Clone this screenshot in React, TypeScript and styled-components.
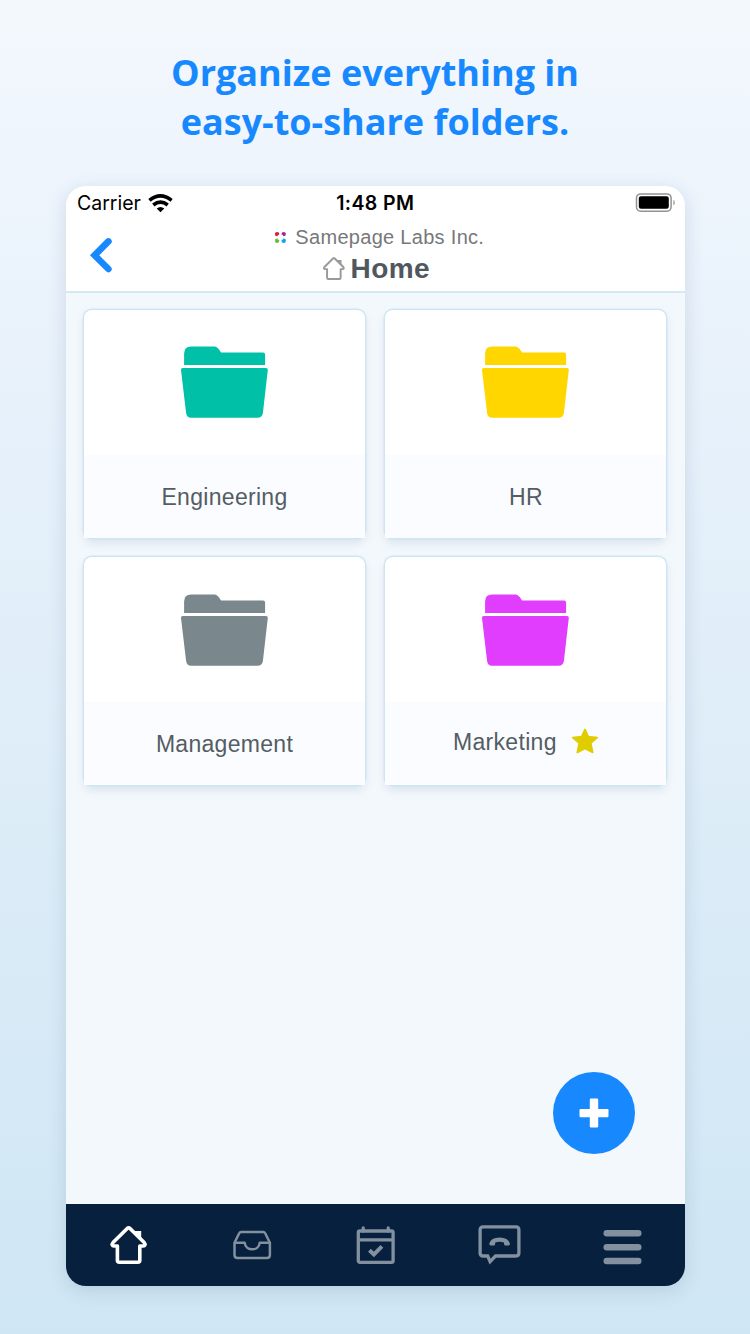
import React from "react";
import styled, { createGlobalStyle } from "styled-components";

const GlobalStyle = createGlobalStyle`
  * { box-sizing: border-box; }
  body { margin: 0; }
  svg { display: block; flex: none; overflow: visible; }
  button { border: 0; padding: 0; background: none; font: inherit; }
`;

const Page = styled.main`
  width: 750px;
  height: 1334px;
  overflow: hidden;
  display: flex;
  flex-direction: column;
  align-items: flex-start;
  background: linear-gradient(180deg, #f3f8fc 0%, #eef5fd 12%, #e9f2fb 25%, #cfe6f4 100%);
`;

const Headline = styled.h1`
  margin: 0;
  width: 750px;
  height: 186px;
  padding-top: 48px;
  font: 700 36px/49px "Open Sans", sans-serif;
  text-align: center;
  color: #1788fe;
`;

const Phone = styled.section`
  width: 618.6px;
  height: 1100px;
  margin-left: 66px;
  border-radius: 20px;
  overflow: hidden;
  display: flex;
  flex-direction: column;
  background: #f3f8fc;
  box-shadow: 0 4px 18px rgba(60, 90, 130, 0.17);
  font-family: "Liberation Sans", Arial, sans-serif;
`;

const StatusBar = styled.div`
  height: 34px;
  display: grid;
  grid-template-columns: 1fr auto 1fr;
  align-items: center;
  padding: 0 9px 0 11px;
  font-family: Inter, sans-serif;
  font-size: 19.5px;
  color: #000;
`;

const Carrier = styled.div`
  display: flex;
  align-items: center;
  gap: 7px;
`;

const Time = styled.div`
  padding-right: 2px;
  font-weight: 600;
  letter-spacing: 0.4px;
`;

const BatterySlot = styled.div`
  display: flex;
  justify-content: flex-end;
  padding-bottom: 1px;
`;

const Header = styled.header`
  height: 73px;
  display: grid;
  grid-template-columns: 60px 1fr 60px;
  background: #fff;
  border-bottom: 2px solid #d3e9f5;
`;

const TopArea = styled.div`
  background: #fff;
`;

const BackButton = styled.button`
  display: flex;
  padding: 17px 0 0 23px;
`;

const Titles = styled.div`
  display: flex;
  flex-direction: column;
  align-items: center;
`;

const Workspace = styled.div`
  height: 33px;
  display: flex;
  align-items: center;
  gap: 8px;
  padding: 2px 0 0 8px;
  font-size: 20px;
  letter-spacing: 0.3px;
  color: #77787a;
`;

const PageTitle = styled.div`
  height: 32px;
  display: flex;
  align-items: center;
  gap: 6px;
  padding-left: 1px;
  font-size: 28px;
  font-weight: 700;
  letter-spacing: 0.4px;
  color: #50585f;
`;

const TitleIcon = styled.span`
  padding-bottom: 1px;
  color: #999;
`;

const Content = styled.div`
  flex: 1;
  display: flex;
  flex-direction: column;
  justify-content: space-between;
  padding: 16.5px 17px 50px 18px;
`;

const Grid = styled.div`
  display: grid;
  grid-template-columns: 281px 281px;
  gap: 19.5px 20.4px;
`;

const Card = styled.article`
  height: 228px;
  display: flex;
  flex-direction: column;
  border-radius: 8px;
  background: #fff;
  box-shadow: 0 0 0 1.5px #cde6f4, 0 5px 10px rgba(70, 100, 140, 0.15);
`;

const CardArt = styled.div`
  height: 145px;
  display: flex;
  justify-content: center;
  padding-top: 36.5px;
`;

const CardLabel = styled.div<{ $starred?: boolean }>`
  flex: 1;
  display: flex;
  align-items: center;
  justify-content: center;
  gap: 14px;
  padding-top: ${({ $starred }) => ($starred ? 0 : 2)}px;
  padding-bottom: ${({ $starred }) => ($starred ? 2 : 0)}px;
  background: #fafcff;
  font-size: 23px;
  letter-spacing: 0.3px;
  color: #545d63;
`;

const AddButton = styled.button`
  align-self: flex-end;
  width: 82px;
  height: 82px;
  margin-right: 32.5px;
  border-radius: 50%;
  background: #1788fe;
  display: flex;
  align-items: center;
  justify-content: center;
`;

const TabBar = styled.nav`
  height: 82.5px;
  display: grid;
  grid-template-columns: repeat(5, 1fr);
  align-items: center;
  background: #06203d;
`;

const Tab = styled.button<{ $active?: boolean }>`
  display: flex;
  justify-content: center;
  color: ${({ $active }) => ($active ? "#fff" : "#82909f")};
`;

const House = ({ size, stroke }: { size: number; stroke: number }) => (
  <svg width={size} height={size} viewBox="-0.6 0 38 38" fill="none" stroke="currentColor" strokeWidth={stroke} strokeLinejoin="round">
    <path d="M17.6 2.4 Q19 1.2 20.4 2.4 L34.6 16.6 C36.2 18.4 35.4 20 33.6 20 H30.2 V34.2 Q30.2 36.2 28.2 36.2 H9.8 Q7.8 36.2 7.8 34.2 V20 H4.4 C2.6 20 1.8 18.4 3.4 16.6 Z" />
    <path d="M25 5 H31.6 V14 L25 7.4 Z" fill="currentColor" stroke="none" />
  </svg>
);

const Folder = ({ color }: { color: string }) => (
  <svg width="88" height="72" viewBox="0.4 0 88 72" fill={color}>
    <path d="M3.5 19 V7.5 Q3.5 0.5 10.5 0.5 H33 C37 0.5 38 3 40.5 6.5 H82.5 Q84.5 6.5 84.5 8.5 V19 Z" />
    <path d="M2 22 H85.5 Q87.3 22 87.2 24 L82.3 67 Q81.6 71.7 77 71.7 H10.5 Q6 71.7 5.5 67 L0.4 24 Q0.3 22 2 22 Z" />
  </svg>
);

const Star = () => (
  <svg width="28" height="28" viewBox="0 2 28 28">
    <path
      d="M14 2.4 L17.3 9.6 L26.2 10.5 L19.8 16.2 L21.7 25.4 L14 21.6 L6.3 25.4 L8.2 16.2 L1.8 10.5 L10.7 9.6 Z"
      fill="#e0cd00"
      stroke="#e0cd00"
      strokeWidth="1.7"
      strokeLinejoin="round"
    />
  </svg>
);

const Wifi = () => (
  <svg width="26" height="19" viewBox="0.5 0 26 19" fill="none" stroke="#000" strokeWidth="3.6">
    <path d="M1.9 6.3 Q13 -2.5 24.1 6.3" />
    <path d="M5.8 11 Q13 5.2 20.2 11" />
    <path d="M9.2 14.4 Q13 11.4 16.8 14.4 L13 18.3 Z" fill="#000" stroke="none" />
  </svg>
);

const Battery = () => (
  <svg width="40" height="20" viewBox="0.4 0 40 20">
    <rect x="0.9" y="0.9" width="34.6" height="17.4" rx="4.2" fill="none" stroke="#929292" strokeWidth="1.5" />
    <rect x="3.2" y="3.3" width="30" height="12.5" rx="2.2" fill="#000" />
    <path d="M38.2 7.4 Q39.4 9.6 38.2 11.8 Z" fill="#929292" stroke="#929292" strokeWidth="0.6" />
  </svg>
);

const Logo = () => (
  <svg width="13" height="13" viewBox="0 0 13 13">
    <circle cx="3.1" cy="3.1" r="2.2" fill="#e8173f" />
    <circle cx="9.7" cy="3.1" r="2.2" fill="#a62793" />
    <circle cx="3.1" cy="9.7" r="2.2" fill="#65bd45" />
    <circle cx="9.7" cy="9.7" r="2.2" fill="#13a5e5" />
    <g fill="#fff">
      <circle cx="4.6" cy="4.7" r="1" />
      <circle cx="8.2" cy="4.7" r="1" />
      <circle cx="4.5" cy="8" r="0.8" />
      <circle cx="8.3" cy="8" r="0.8" />
    </g>
  </svg>
);

const folders = [
  { name: "Engineering", color: "#00c1a7" },
  { name: "HR", color: "#ffd600" },
  { name: "Management", color: "#7a888e" },
  { name: "Marketing", color: "#e03dff", starred: true },
];

export default function App() {
  return (
    <>
      <GlobalStyle />
      <Page>
        <Headline>
          Organize everything in
          <br />
          easy-to-share folders.
        </Headline>
        <Phone>
          <TopArea>
            <StatusBar>
              <Carrier>
                Carrier
                <Wifi />
              </Carrier>
              <Time>1:48 PM</Time>
              <BatterySlot>
                <Battery />
              </BatterySlot>
            </StatusBar>
            <Header>
              <BackButton aria-label="Back">
                <svg width="24" height="36" viewBox="0 0 24 36">
                  <path d="M19.4 4.4 L5.6 18.3 L19.4 32" fill="none" stroke="#1788fe" strokeWidth="6.6" strokeLinecap="round" strokeLinejoin="miter" />
                </svg>
              </BackButton>
              <Titles>
                <Workspace>
                  <Logo />
                  Samepage Labs Inc.
                </Workspace>
                <PageTitle>
                  <TitleIcon>
                    <House size={23} stroke={3.2} />
                  </TitleIcon>
                  Home
                </PageTitle>
              </Titles>
            </Header>
          </TopArea>
          <Content>
            <Grid>
              {folders.map((f) => (
                <Card key={f.name}>
                  <CardArt>
                    <Folder color={f.color} />
                  </CardArt>
                  <CardLabel $starred={f.starred}>
                    {f.name}
                    {f.starred && <Star />}
                  </CardLabel>
                </Card>
              ))}
            </Grid>
            <AddButton aria-label="Add">
              <svg width="30" height="30" viewBox="0 0 30 30" fill="#fff">
                <rect x="0.5" y="11" width="29" height="8.2" rx="1.2" />
                <rect x="10.8" y="0.5" width="8.4" height="29" rx="1.2" />
              </svg>
            </AddButton>
          </Content>
          <TabBar>
            <Tab $active aria-label="Home">
              <House size={38} stroke={3.6} />
            </Tab>
            <Tab aria-label="Inbox">
              <svg width="38" height="29" viewBox="-0.2 -0.5 38 29" fill="none" stroke="currentColor" strokeWidth="2.5" strokeLinejoin="round">
                <path d="M1.3 12.3 L6 2.8 Q6.6 1.4 8 1.4 H30 Q31.4 1.4 32 2.8 L36.7 12.3 V24.5 Q36.7 27.5 33.7 27.5 H4.3 Q1.3 27.5 1.3 24.5 Z" />
                <path d="M1.3 12.3 H11.5 C12.5 21 25.5 21 26.5 12.3 H36.7" />
              </svg>
            </Tab>
            <Tab aria-label="Calendar">
              <svg width="38" height="38" viewBox="-0.7 0 38 38" fill="none" stroke="currentColor" strokeWidth="3.3">
                <rect x="1.6" y="5" width="34.8" height="31.3" rx="1.6" />
                <path d="M1.6 13.9 H36.4" />
                <path d="M6.5 5 V2 M31.5 5 V2" strokeLinecap="round" />
                <path d="M12.7 24.2 L17.2 28.4 L25.2 20.4" strokeWidth="4" />
              </svg>
            </Tab>
            <Tab aria-label="Chat">
              <svg width="42" height="40" viewBox="-0.5 0 42 40" fill="none" stroke="currentColor" strokeWidth="3.3">
                <path d="M4.6 1.9 H37.4 Q40.4 1.9 40.4 4.9 V28 Q40.4 31 37.4 31 H17 L11.6 36.6 L9.2 31 H4.6 Q1.6 31 1.6 28 V4.9 Q1.6 1.9 4.6 1.9 Z" />
                <path d="M10.8 18.6 Q12.4 12.6 21 12.6 Q29.8 12.6 31.4 18.6 Q31.6 20.4 30 20.4 H26.6 Q25.4 20.4 25.4 17.4 Q21 16 16.8 17.4 Q16.8 20.4 15.6 20.4 H12.2 Q10.6 20.4 10.8 18.6 Z" fill="currentColor" stroke="none" />
              </svg>
            </Tab>
            <Tab aria-label="Menu">
              <svg width="38" height="36" viewBox="0.5 0 38 36" fill="currentColor">
                <rect y="3" width="38" height="6.4" rx="3.2" />
                <rect y="17" width="38" height="6.4" rx="3.2" />
                <rect y="30.8" width="38" height="6.4" rx="3.2" />
              </svg>
            </Tab>
          </TabBar>
        </Phone>
      </Page>
    </>
  );
}
